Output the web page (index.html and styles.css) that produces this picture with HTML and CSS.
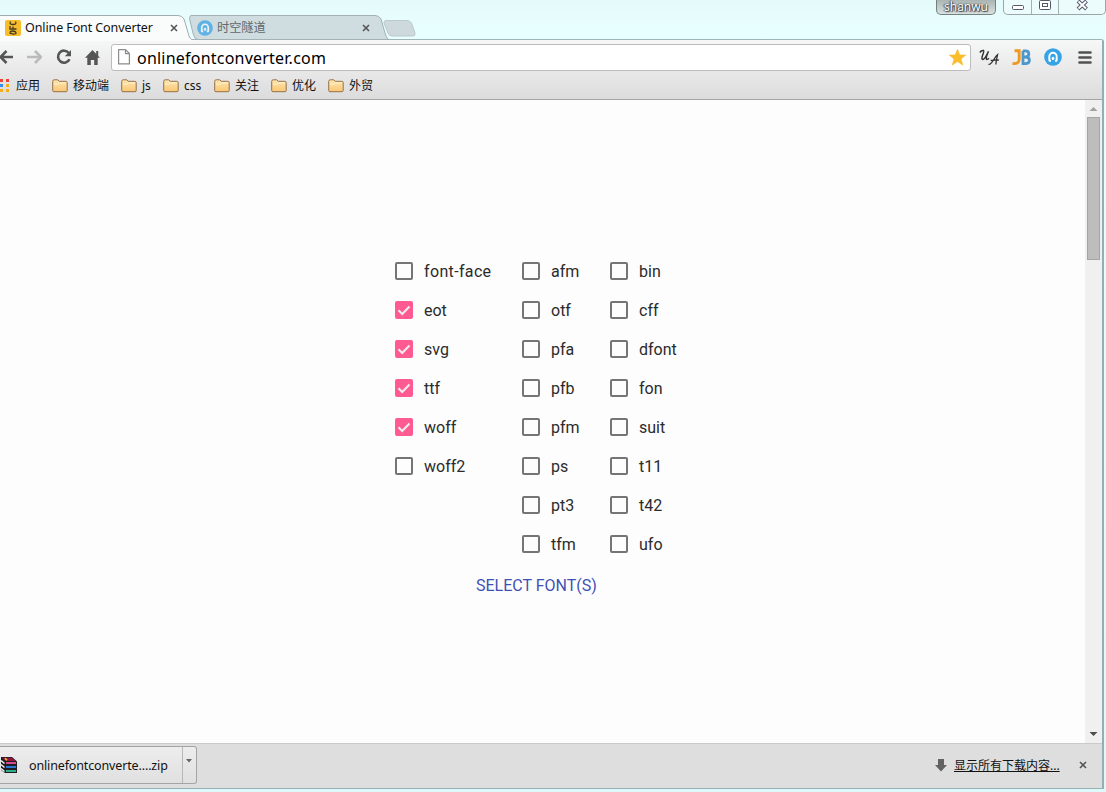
FILE: index.html
```html
<!DOCTYPE html>
<html lang="zh-CN">
<head>
<meta charset="utf-8">
<title>Online Font Converter</title>
<link rel="stylesheet" href="styles.css">
</head>
<body>
<svg width="0" height="0" class="defs">
  <defs>
    <linearGradient id="fold" x1="0" y1="0" x2="0" y2="1"><stop offset="0" stop-color="#ffe6ae"/><stop offset="1" stop-color="#f9c775"/></linearGradient>
    <symbol id="folder" viewBox="0 0 16 14"><path d="M.7 2.5Q.7.8 2.2.8H5.8L7.2 2.3H13.8Q15.2 2.3 15.2 3.7V11.5Q15.2 12.7 14 12.7H2Q.7 12.7.7 11.5Z" fill="url(#fold)" stroke="#96714a"/><path d="M2 5.2H6L7.5 4H14" fill="none" stroke="#fff3d2"/></symbol>
    <symbol id="cross" viewBox="0 0 8 8"><path d="M1 1L7 7M7 1L1 7" stroke="#555" stroke-width="1.6"/></symbol>
    <symbol id="tick" viewBox="0 0 18 18"><path d="M3.500 9.300L7.200 13L14.500 5.500" fill="none" stroke="#f3edf0" stroke-width="2"/></symbol>
    <symbol id="tunnel" viewBox="0 0 18 18"><circle cx="9" cy="9" r="8.8" fill="#35a3e6"/><path d="M4.800 12.800H7M11 12.800H13.200M5.300 12.800V8.800a3.700 4 0 0 1 7.400 0V12.800" fill="none" stroke="#fff" stroke-width="1.900"/><path d="M9 8.400L11 10.400H9.900V12H8.100V10.400H7Z" fill="#fff"/></symbol>
  </defs>
</svg>
<div class="desktop">
  <header class="titlebar">
    <div class="tabs">
      <div class="tab active">
        <svg class="shape" width="196" height="26"><path d="M-1 .5H178Q182 .5 184 4L189 21Q190.500 25.500 196 25.500V27H-1Z" fill="#fafcfc" stroke="#a3adaf"/><path d="M-1 25.500H196" stroke="#fafcfc"/></svg>
        <svg class="favicon" width="16" height="16"><rect width="16" height="16" rx="2" fill="#f5bd2c"/><g transform="translate(4 15) rotate(-90)" fill="none" stroke="#4b3a20" stroke-width="1.300"><path d="M1 1.500Q4 0 4 3.500Q4 7 1.500 7Q0 4 2 2"/><path d="M9 1H6V7.500M6 4H8.500"/><path d="M13.500 1.500Q10.500 0 10.500 4Q10.500 8 13.500 6.500"/></g></svg>
        <span class="tab-name">Online Font Converter</span>
        <svg class="close" width="8" height="8"><use href="#cross"/></svg>
      </div>
      <div class="tab idle">
        <svg class="shape" width="200" height="25"><path d="M2 .5H186Q190 .5 192 4L196 18Q198 24.500 200 24.500H9Q6 24.500 4.500 20L1 6Q0 1 2 .5Z" fill="#cfdde0" stroke="#a3b1b5"/></svg>
        <svg class="favicon" width="16" height="16" viewBox="0 0 18 18" opacity=".72"><use href="#tunnel"/></svg>
        <span class="tab-name">时空隧道</span>
        <svg class="close" width="8" height="8"><use href="#cross"/></svg>
      </div>
      <svg class="newtab" width="33" height="18"><path d="M3 .5H24Q27 .5 28.500 3L32 13Q32.500 16 30 16H9Q6 16 5 13L1 3Q.5 1 3 .5Z" fill="#cdd9dc" stroke="#bcc8ca"/></svg>
    </div>
    <span class="user">shanwu</span>
    <div class="controls">
      <svg width="27" height="14"><rect x="8.500" y="5.500" width="11" height="4" rx="1" fill="#fff" stroke="#555768"/></svg>
      <svg width="27" height="14"><rect x="7.500" y=".5" width="11" height="9" rx="1" fill="#fff" stroke="#555768"/><rect x="10.500" y="3.500" width="5" height="3" fill="#fff" stroke="#555768"/></svg>
      <svg width="47" height="14"><path d="M19 1L27.500 9M27.500 1L19 9" stroke="#555768" stroke-width="4"/><path d="M19.500 1.500L27 8.500M27 1.500L19.500 8.500" stroke="#fff" stroke-width="2"/></svg>
    </div>
  </header>

  <main class="window">
    <div class="chrome">
      <div class="toolbar">
        <svg class="nav" width="13" height="14"><path d="M-2 7H13M6.500 1L.5 7L6.500 13" fill="none" stroke="#555" stroke-width="2.600"/></svg>
        <svg class="nav forward" width="15" height="14"><path d="M0 7H13M8 1L14 7L8 13" fill="none" stroke="#bbb" stroke-width="2.600"/></svg>
        <svg class="nav reload" width="16" height="16"><path d="M12.800 4A6 6 0 1 0 13.500 10.200" fill="none" stroke="#555" stroke-width="2.600"/><path d="M15 1V7.200H8.800Z" fill="#555"/></svg>
        <svg class="nav home" width="15" height="15"><path d="M7.500 0L15 7.800H12.700V15H9.200V10H5.800V15H2.300V7.800H0Z" fill="#555"/><path d="M11.200 1H13.200V6H11.200Z" fill="#555"/></svg>
        <div class="omnibox">
          <svg width="12" height="16"><path d="M.6.600H7.500L11.400 4.600V14.900H.6ZM7.500.6V4.600H11.400" fill="#fff" stroke="#8c8c8c" stroke-width="1.200"/></svg>
          <span class="url">onlinefontconverter.com</span>
          <svg class="star" width="17" height="17" viewBox="0 0 17 17"><path d="M8.500 .3L10.800 6H16.800L12 9.900L13.800 16.200L8.500 12.600L3.200 16.200L5 9.900L.2 6H6.200Z" fill="#fabd2c" stroke="#fabd2c" stroke-width=".6"/></svg>
        </div>
        <svg class="ext ua" width="21" height="17"><path d="M.8 3.500Q2.500 1 4.500 1.500Q5.300 2 3.500 6.500Q2.200 10.500 3.800 10.500Q5.800 10.500 9.500 2.200Q6.500 9 7.600 10.400Q8.400 10.800 10 9.300" fill="none" stroke="#333" stroke-width="1.500"/><path d="M9.500 15.300Q11.500 16 14.500 11Q16.500 7.500 18.500 5.800Q17.300 11 16.800 15.500M11.700 11.500Q16 10.600 20 11.200" fill="none" stroke="#333" stroke-width="1.300"/></svg>
        <svg class="ext jb" width="20" height="17"><path d="M2.500 1.800H7.200V10.500Q7.200 15.200 .5 14.500" fill="none" stroke="#ed9922" stroke-width="2.900"/><path d="M11 1.800V14.700H13.500Q17.400 14.700 17.400 11.300Q17.400 8 13.500 8H11M13.500 8Q16.800 8 16.800 4.800Q16.800 1.800 13.500 1.800H11" fill="none" stroke="#4c98cc" stroke-width="2.800"/></svg>
        <svg class="ext round" width="18" height="18"><use href="#tunnel"/></svg>
        <svg class="menu" width="14" height="13"><path d="M1.500 1.500H12.500M1.500 6.500H12.500M1.500 11.500H12.500" stroke="#515151" stroke-width="2.600" stroke-linecap="round"/></svg>
      </div>
      <nav class="bookmarks">
        <svg class="apps" width="9" height="13"><path d="M0 0h3v3h-3zM6 0h3v3h-3z" fill="#ed4238"/><path d="M0 5h3v3h-3z" fill="#3b8cec"/><path d="M6 5h3v3h-3zM0 10h3v3h-3zM6 10h3v3h-3z" fill="#f6ae18"/></svg>
        <span class="bm apps-name">应用</span>
        <span class="bm w69"><svg width="16" height="14"><use href="#folder"/></svg>移动端</span>
        <span class="bm w42"><svg width="16" height="14"><use href="#folder"/></svg>js</span>
        <span class="bm w51"><svg width="16" height="14"><use href="#folder"/></svg>css</span>
        <span class="bm w57"><svg width="16" height="14"><use href="#folder"/></svg>关注</span>
        <span class="bm w57"><svg width="16" height="14"><use href="#folder"/></svg>优化</span>
        <span class="bm w57"><svg width="16" height="14"><use href="#folder"/></svg>外贸</span>
      </nav>
    </div>

    <div class="viewport">
      <section class="page">
        <div class="formats">
          <div class="col first">
            <label class="opt wide"><i class="box"></i>font-face</label>
            <label class="opt"><svg class="box on"><use href="#tick"/></svg>eot</label>
            <label class="opt"><svg class="box on"><use href="#tick"/></svg>svg</label>
            <label class="opt"><svg class="box on"><use href="#tick"/></svg>ttf</label>
            <label class="opt"><svg class="box on"><use href="#tick"/></svg>woff</label>
            <label class="opt"><i class="box"></i>woff2</label>
          </div>
          <div class="col second">
            <label class="opt"><i class="box"></i>afm</label>
            <label class="opt"><i class="box"></i>otf</label>
            <label class="opt"><i class="box"></i>pfa</label>
            <label class="opt"><i class="box"></i>pfb</label>
            <label class="opt"><i class="box"></i>pfm</label>
            <label class="opt"><i class="box"></i>ps</label>
            <label class="opt"><i class="box"></i>pt3</label>
            <label class="opt"><i class="box"></i>tfm</label>
          </div>
          <div class="col">
            <label class="opt"><i class="box"></i>bin</label>
            <label class="opt"><i class="box"></i>cff</label>
            <label class="opt"><i class="box"></i>dfont</label>
            <label class="opt"><i class="box"></i>fon</label>
            <label class="opt"><i class="box"></i>suit</label>
            <label class="opt"><i class="box"></i>t11</label>
            <label class="opt"><i class="box"></i>t42</label>
            <label class="opt"><i class="box"></i>ufo</label>
          </div>
        </div>
        <div class="select">SELECT FONT(S)</div>
      </section>
      <div class="scrollbar">
        <svg width="17" height="17"><path d="M4.500 11L8.500 7L12.500 11Z" fill="#a2a2a2"/></svg>
        <div class="thumb"></div>
        <svg class="down" width="17" height="17"><path d="M4.500 6L8.500 10L12.500 6Z" fill="#4d4d4d"/></svg>
      </div>
    </div>

    <footer class="shelf">
      <div class="download">
        <svg width="17" height="17"><path d="M1 0H12L17 4.500V16H5L1 13Z" fill="#1c1c22"/><path d="M2 .8H12L15.500 4H5.500Z" fill="#8f1540"/><path d="M6 5H16V7H6Z" fill="#d64a8c"/><path d="M6 9H16V11H6Z" fill="#2b76d0"/><path d="M6 13H16V15H6Z" fill="#2bb08a"/><path d="M1 3.500L4.500 6.500M1 7.500L4.500 10.500M1 11.500L4.500 14.500" stroke="#f4f4f4" stroke-width="1.500"/><path d="M5 1.200L7 3.200" stroke="#edc52e" stroke-width="1.600"/></svg>
        <span class="file">onlinefontconverte....zip</span>
        <span class="more"><svg width="6" height="4"><path d="M0 0H6L3 3.500Z" fill="#666"/></svg></span>
      </div>
      <svg class="arrow" width="12" height="13"><path d="M3 0H9V6H12L6 12.500L0 6H3Z" fill="#626262"/></svg>
      <span class="all">显示所有下载内容...</span>
      <svg class="dismiss" width="8" height="8"><use href="#cross"/></svg>
    </footer>
  </main>
</div>
</body>
</html>
```
FILE: styles.css
```css
* { box-sizing: border-box; }
body { margin: 0; font-family: "Noto Sans", "Noto Sans CJK SC", sans-serif; font-size: 12px; color: #111; }
svg { display: block; flex: none; }
.defs { position: absolute; }
.desktop { width: 1106px; height: 792px; overflow: hidden; display: flex; flex-direction: column; background: linear-gradient(#e5fafb, #e8ffff 30px, #dff8fa); }

.titlebar { height: 39px; flex: none; display: flex; align-items: flex-start; }
.tabs { display: flex; width: 936px; padding-top: 15px; }
.tab { position: relative; height: 25px; display: flex; align-items: center; white-space: nowrap; }
.tab > * { position: relative; }
.tab .shape { position: absolute; left: 0; top: 0; }
.active { width: 189px; padding-left: 5px; z-index: 2; }
.idle { width: 194px; padding-left: 8px; color: #60696d; }
.favicon { margin-right: 4px; }
.tab-name { width: 145px; font-size: 12.500px; line-height: 18px; }
.active .tab-name { letter-spacing: -.1px; }
.idle .tab-name { font-size: 12.200px; }
.newtab { margin-top: 5px; }
.user { width: 60px; height: 15px; border: 1px solid #74817f; border-top: 0; border-radius: 0 0 5px 5px; background: linear-gradient(#aab5b3, #d8e1e0); color: #fff; font-family: "Open Sans", sans-serif; font-size: 12px; line-height: 14px; text-align: center; text-shadow: 0 0 2px #333, 1px 1px 1px #444, -1px 0 1px #555; }
.controls { display: flex; margin-left: 7px; height: 15px; border: 1px solid #99a5a7; border-top: 0; border-radius: 0 0 5px 5px; background: #ecfcfc; }
.controls svg + svg { border-left: 1px solid #a3b1b3; }

.window { width: 1104px; height: 750px; flex: none; display: flex; flex-direction: column; border: 1px solid #a0b4b7; border-left: 0; border-right: 2px solid #94aeb3; border-bottom: 2px solid #92b2b8; border-radius: 0 3px 0 0; }
.chrome { height: 60px; flex: none; background: linear-gradient(#f6f7f7, #ebebeb 25px, #dcdcdc); border-bottom: 1px solid #a5a5a5; }
.toolbar { height: 34px; display: flex; align-items: center; }
.forward { margin-left: 14px; }
.reload { margin-left: 14px; }
.home { margin-left: 13px; }
.omnibox { width: 860px; height: 27px; margin-left: 11px; padding: 0 4px 0 6px; display: flex; align-items: center; background: #fff; border: 1px solid #bcbcbc; border-radius: 3px; }
.url { flex: 1; margin-left: 7px; padding-top: 1px; font-size: 16px; line-height: 22px; letter-spacing: .22px; color: #000; }
.ua { margin-left: 8px; }
.jb { margin-left: 12px; }
.round { margin-left: 12px; }
.menu { margin-left: 16px; }
.bookmarks { height: 23px; display: flex; align-items: center; font-size: 12px; }
.bm { display: flex; align-items: center; gap: 5px; white-space: nowrap; line-height: 18px; }
.apps-name { width: 36px; margin-left: 7px; }
.w69 { width: 69px; }
.w42 { width: 42px; }
.w51 { width: 51px; }
.w57 { width: 57px; }

.viewport { height: 643px; flex: none; display: flex; background: #fdfdfd; }
.page { width: 1085px; padding: 152px 0 0 395px; font-family: Roboto, sans-serif; font-size: 16px; color: #2b2b2b; }
.formats { display: flex; }
.col { display: flex; flex-direction: column; }
.first { width: 127px; }
.second { width: 88px; }
.opt { height: 39px; display: flex; align-items: center; gap: 11px; white-space: nowrap; }
.wide { letter-spacing: .35px; }
.box { width: 18px; height: 18px; flex: none; margin-bottom: 2px; border: 2px solid #757575; border-radius: 2px; }
.on { border: 0; background: #ff5a91; }
.select { width: 121px; margin: 10px 0 0 81px; color: #3f51b5; line-height: 24px; white-space: nowrap; }
.scrollbar { width: 17px; display: flex; flex-direction: column; background: #f0f0f0; }
.thumb { width: 13px; height: 143px; margin-left: 2px; background: #bdbdbd; border: 1px solid #a5a5a5; }
.down { margin-top: auto; }

.shelf { height: 45px; flex: none; display: flex; align-items: center; padding-bottom: 2px; background: #dedede; border-top: 1px solid #cacaca; }
.download { width: 197px; height: 38px; display: flex; align-items: center; background: linear-gradient(#ededed, #e0e0e0); border: 1px solid #a4a4a4; border-left: 0; border-radius: 0 3px 3px 0; }
.file { width: 153px; margin-left: 12px; font-size: 12.500px; letter-spacing: -.14px; white-space: nowrap; }
.more { height: 36px; width: 14px; padding: 12px 0 0 3px; border-left: 1px solid #b8b8b8; }
.arrow { margin-left: 738px; }
.all { width: 105px; margin-left: 7px; font-size: 12px; line-height: 15px; white-space: nowrap; text-decoration: underline; }
.dismiss { margin-left: 20px; }
```
